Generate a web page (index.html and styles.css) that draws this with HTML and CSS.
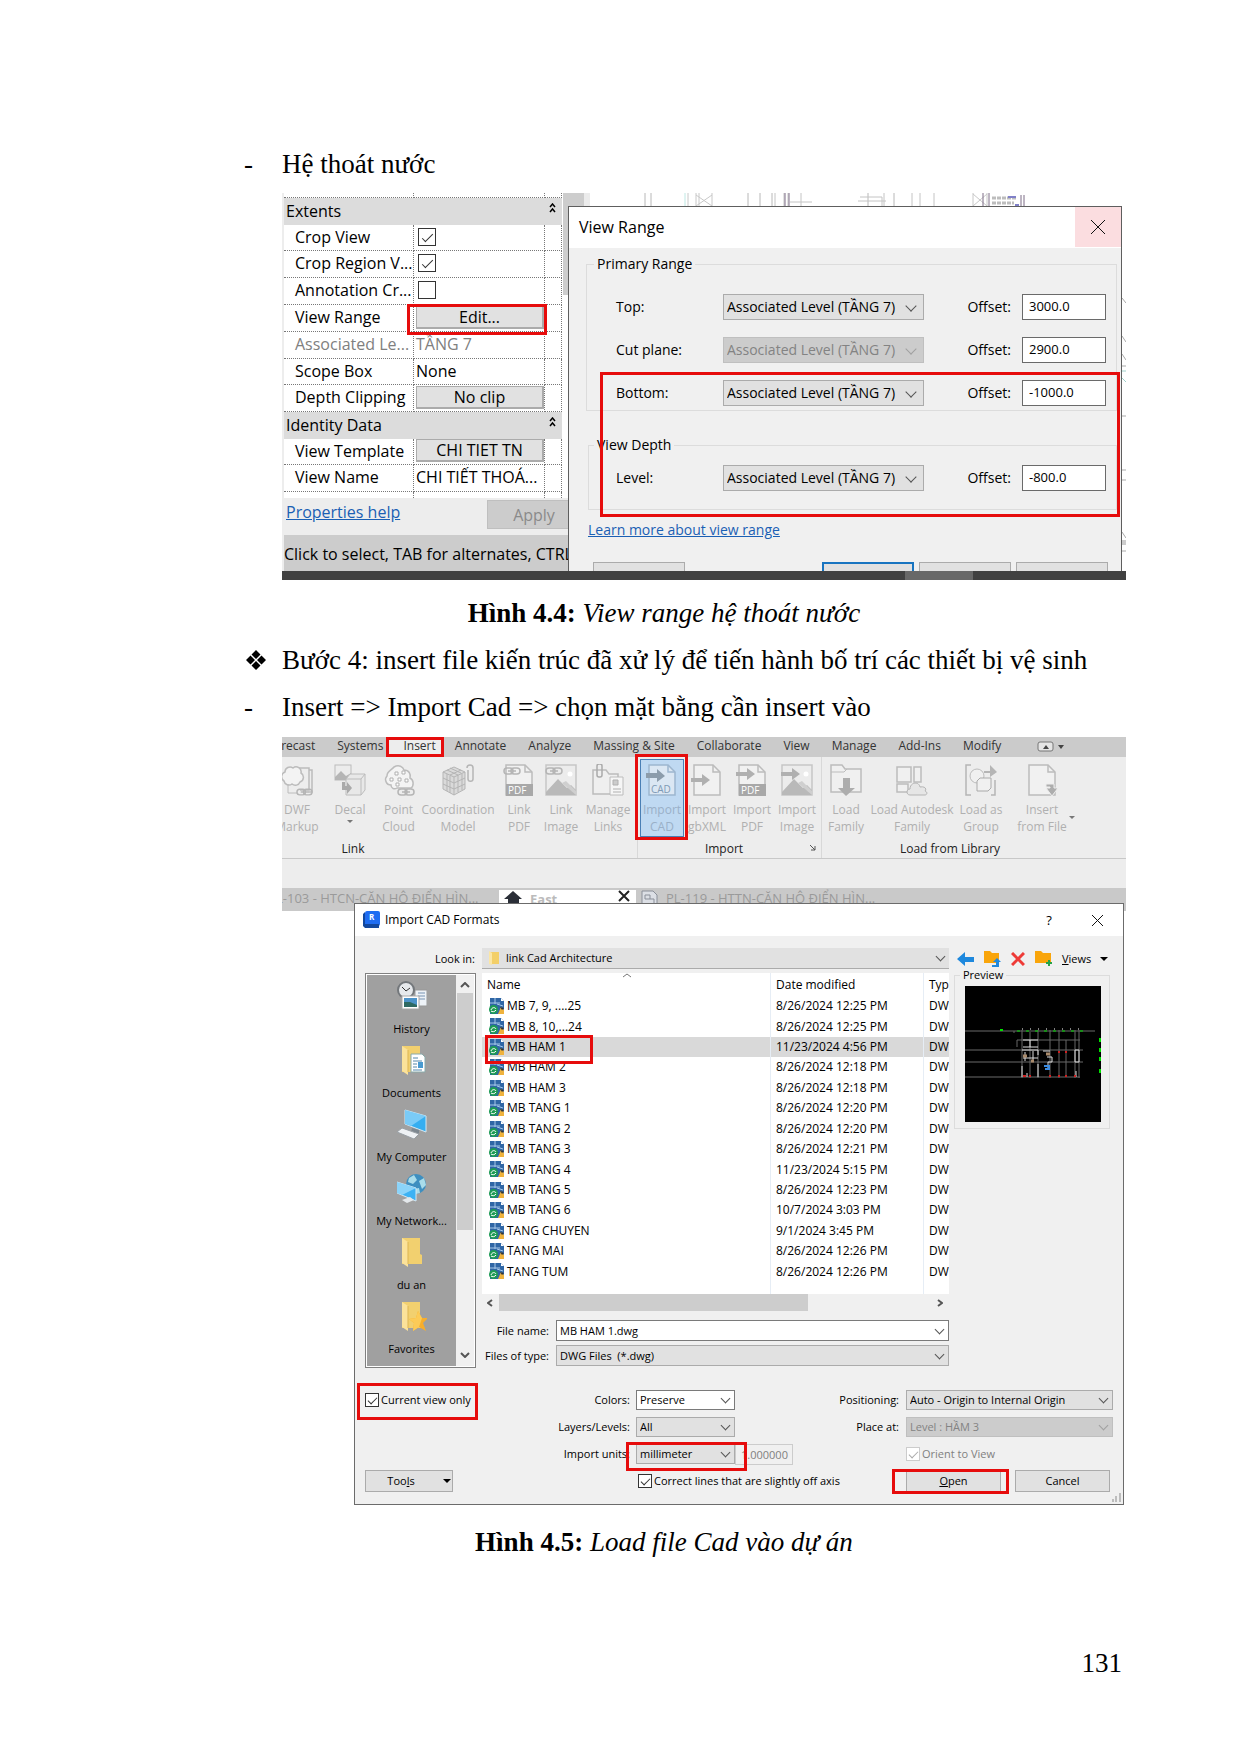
FILE: index.html
```html
<!DOCTYPE html>
<html lang="vi">
<head>
<meta charset="utf-8">
<meta name="viewport" content="width=device-width, initial-scale=1">
<title>Hệ thoát nước</title>
<link rel="stylesheet" href="styles.css">
</head>
<body>
<svg class="defs" aria-hidden="true">
  <symbol id="dwg" viewBox="0 0 16 16">
    <path d="M1 0h11l3 3v13H1z" fill="#2f66a5"/><path d="M12 0l3 3h-3z" fill="#fff"/>
    <path d="M6 0v6M1 5h10M8 6l6 2" stroke="#a9c9ea" fill="none"/>
    <path d="M9 16l3-7 3 3v4z" fill="#efb23c"/><path d="M11 9l2 3 2-2" fill="#333"/>
    <circle cx="4.500" cy="11.500" r="4.500" fill="#1d9a55"/><path d="M2 12c1-3 4-3 5-1M7 12c-1 2-4 2-5 1" stroke="#fff" fill="none"/>
  </symbol>
  <symbol id="folder" viewBox="0 0 30 30">
    <path d="M5 1h18v16l2 1v9H5z" fill="#f2d06f"/><path d="M5 1l6 4v25l-6-4z" fill="#fbe29a"/><path d="M11 5v22" stroke="#dcb553"/>
  </symbol>
  <symbol id="page" viewBox="0 0 32 32">
    <path d="M3 1h19l7 7v23H3z" fill="#f1f1f1" stroke="#bcbcbc" stroke-width="1.500"/><path d="M22 1v7h7" fill="none" stroke="#bcbcbc" stroke-width="1.500"/>
  </symbol>
  <symbol id="arrow" viewBox="0 0 20 12"><path d="M0 4h11V0l8 6-8 6V8H0z" fill="#b0b0b0"/></symbol>
  <symbol id="chain" viewBox="0 0 18 8"><rect x="1" y="1" width="9" height="6" rx="3" fill="none" stroke="#b5b5b5" stroke-width="1.500"/><rect x="8" y="1" width="9" height="6" rx="3" fill="none" stroke="#b5b5b5" stroke-width="1.500"/><path d="M5 4h8" stroke="#b5b5b5" stroke-width="1.500"/></symbol>
  <symbol id="picture" viewBox="0 0 32 32"><rect x="1" y="1" width="30" height="30" fill="#ececec" stroke="#c6c6c6" stroke-width="1.500"/><circle cx="25" cy="10" r="2.500" fill="#fff"/><path d="M1 28l12-13 9 9 4-3 5 5v5H1z" fill="#b9b9b9"/><path d="M17 19l4-2 10 10v4z" fill="#cfcfcf"/></symbol>
</svg>

<main class="sheet">
  <ul class="notes">
    <li class="dash">Hệ thoát nước</li>
  </ul>

  <figure>
    <div class="shot range-shot">
      <div class="range-body">
        <section class="props">
          <div class="props-top">
            <table class="prop-table">
              <colgroup><col class="c-name"><col class="c-value"><col class="c-more"></colgroup>
              <tbody>
                <tr class="sliver-top"><td></td><td></td><td></td></tr>
                <tr class="group"><th colspan="3"><span>Extents<svg width="7" height="10" viewBox="0 0 7 10"><path d="M1 4l2.500-3L6 4M1 9l2.500-3L6 9" fill="none" stroke="#000" stroke-width="1.500"/></svg></span></th></tr>
                <tr class="short"><td><label for="crop">Crop View</label></td><td><input type="checkbox" id="crop" checked></td><td></td></tr>
                <tr><td><label for="region">Crop Region V...</label></td><td><input type="checkbox" id="region" checked></td><td></td></tr>
                <tr><td><label for="annot">Annotation Cr...</label></td><td><input type="checkbox" id="annot"></td><td></td></tr>
                <tr><td>View Range</td><td class="marked"><button type="button">Edit...</button><span class="mark mark-edit"></span></td><td></td></tr>
                <tr class="muted"><td>Associated Le...</td><td>TẦNG 7</td><td></td></tr>
                <tr class="short"><td>Scope Box</td><td>None</td><td></td></tr>
                <tr><td>Depth Clipping</td><td><button type="button">No clip</button></td><td></td></tr>
                <tr class="group"><th colspan="3"><span>Identity Data<svg width="7" height="10" viewBox="0 0 7 10"><path d="M1 4l2.500-3L6 4M1 9l2.500-3L6 9" fill="none" stroke="#000" stroke-width="1.500"/></svg></span></th></tr>
                <tr class="short"><td>View Template</td><td><button type="button">CHI TIET TN</button></td><td></td></tr>
                <tr><td>View Name</td><td>CHI TIẾT THOÁ...</td><td></td></tr>
                <tr class="sliver-bottom"><td></td><td></td><td></td></tr>
              </tbody>
            </table>
            <div class="props-scroll"></div>
          </div>
          <div class="props-help"><a href="#help">Properties help</a><button type="button" disabled>Apply</button></div>
          <div class="status">Click to select, TAB for alternates, CTRL</div>
        </section>

        <div class="canvas">
          <svg class="canvas-top" height="13" width="558" viewBox="0 0 558 13">
            <path d="M0 0h16v13H0z" fill="#cdcdcd"/><path d="M16 0h6v13h-6z" fill="#ebebeb"/>
            <path d="M77 0v13M83 0v13M180 0v13M192 0v13M204 0v13M300 0v13M326 0v13" stroke="#b8b8b8"/>
            <path d="M117 0v13" stroke="#bfe8e4"/><path d="M120 0v13M128 0v13M131 0v13M144 0v13M128 2l16 11M144 2l-16 11M405 1l14 12M419 1l-14 12M405 0v13M419 0v13" stroke="#c8c8c8" fill="none"/>
            <path d="M207 0v13M216 0v13M220 0v13M222 9h22M233 0v13M290 8h28M292 4h22v9M316 0v13M344 0v13M352 0v13M366 0v13" stroke="#c4c4c4" fill="none"/>
            <path d="M217 0v13M221 0v13M415 0v13M421 0v13M453 2v11M456 2v11" stroke="#7d6d86"/>
            <path d="M424 5h24M424 10h22" stroke="#bdbdbd" stroke-width="3" stroke-dasharray="4 1"/><path d="M447 12h4M440 4h8" stroke="#8080c8" stroke-width="2"/>
          </svg>
          <div class="canvas-row">
            <section class="range-dialog">
              <header><h2>View Range</h2><button type="button" aria-label="Close"><svg width="16" height="16" viewBox="0 0 16 16"><path d="M1 1l14 14M15 1L1 15" stroke="#111" fill="none"/></svg></button></header>
              <form class="range-form">
                <fieldset class="primary">
                  <legend>Primary Range</legend>
                  <div class="range-row"><label for="top">Top:</label><span class="pick"><select id="top"><option>Associated Level (TẦNG 7)</option></select></span><label for="top-o">Offset:</label><input type="text" id="top-o" value="3000.0"></div>
                  <div class="range-row"><label for="cut">Cut plane:</label><span class="pick off"><select id="cut" disabled><option>Associated Level (TẦNG 7)</option></select></span><label for="cut-o">Offset:</label><input type="text" id="cut-o" value="2900.0"></div>
                  <div class="range-row"><label for="bottom">Bottom:</label><span class="pick"><select id="bottom"><option>Associated Level (TẦNG 7)</option></select></span><label for="bottom-o">Offset:</label><input type="text" id="bottom-o" value="-1000.0"></div>
                </fieldset>
                <fieldset class="depth">
                  <legend>View Depth</legend>
                  <div class="range-row"><label for="level">Level:</label><span class="pick"><select id="level"><option>Associated Level (TẦNG 7)</option></select></span><label for="level-o">Offset:</label><input type="text" id="level-o" value="-800.0"></div>
                </fieldset>
                <span class="mark mark-range"></span>
              </form>
              <a class="learn" href="#learn">Learn more about view range</a>
              <div class="range-buttons"><button type="button" aria-label="Show"></button><button type="button" class="primary-btn" aria-label="OK"></button><button type="button" aria-label="Apply"></button><button type="button" aria-label="Cancel"></button></div>
            </section>
            <svg width="4" height="365" viewBox="0 0 4 365"><path d="M0 92l4 5M0 130l4 6M0 148l4 6M0 160h4M0 210h4M0 264h4M0 274h4M0 326l4 6M0 345h4" stroke="#a9a9a9" fill="none"/><path d="M0 165h4M0 172l4 4" stroke="#9fd0ca"/><path d="M0 334h4v5H0z" fill="#cdcdcd"/></svg>
          </div>
        </div>
      </div>
      <div class="taskbar"><span></span></div>
    </div>
    <figcaption><b>Hình 4.4:</b> <i>View range hệ thoát nước</i></figcaption>
  </figure>

  <ul class="notes">
    <li class="diamond"><svg width="20" height="20" viewBox="0 0 20 20"><path d="M10 0l4.500 4.500L10 9 5.500 4.500zM10 11l4.500 4.500L10 20l-4.500-4.500zM4.500 5.500L9 10l-4.500 4.500L0 10zM15.500 5.500L20 10l-4.500 4.500L11 10z"/></svg>Bước 4: insert file kiến trúc đã xử lý để tiến hành bố trí các thiết bị vệ sinh</li>
    <li class="dash">Insert =&gt; Import Cad =&gt; chọn mặt bằng cần insert vào</li>
  </ul>

  <figure>
    <div class="shot cad-shot">
      <nav class="ribbon-tabs">
        <a class="cut" href="#precast">Precast</a><a href="#systems">Systems</a><a class="current" href="#insert">Insert</a><a href="#annotate">Annotate</a><a href="#analyze">Analyze</a><a href="#massing">Massing &amp; Site</a><a href="#collaborate">Collaborate</a><a href="#view">View</a><a href="#manage">Manage</a><a href="#addins">Add-Ins</a><a href="#modify">Modify</a>
        <svg class="tab-more" width="28" height="12" viewBox="0 0 28 12"><rect x="1" y="1" width="15" height="9" rx="2" fill="#e4e4e4" stroke="#777"/><path d="M6 8l3-4 3 4zM21 4h6l-3 4z" fill="#444"/></svg>
      </nav>

      <div class="ribbon">
        <section class="panel panel-link">
          <div class="tools">
            <button type="button" class="w-dwf"><svg viewBox="0 0 32 32"><path d="M12 4h16v22h-9M28 6h3v22h-4" fill="none" stroke="#bcbcbc" stroke-width="1.500"/><path d="M4 8a5 5 0 0 1 8-4 5 5 0 0 1 8 5 5 5 0 0 1-1 9 5 5 0 0 1-8 2 5 5 0 0 1-8-3 5 5 0 0 1 1-9z" fill="#f3f3f3" stroke="#bcbcbc" stroke-width="1.500"/><path d="M7 20v9h9" fill="none" stroke="#bcbcbc"/><use href="#chain" x="15" y="24" width="17" height="8"/></svg>DWF<br>Markup</button>
            <button type="button" class="w-decal"><svg viewBox="0 0 32 32"><rect x="1" y="1" width="16" height="15" fill="#ececec" stroke="#bcbcbc"/><path d="M1 13l6-6 5 5 5-3v7H1z" fill="#b5b5b5"/><path d="M12 15l4-5h15v16l-4 5H12z" fill="#e8e8e8" stroke="#bcbcbc"/><path d="M12 15h15v16M27 15l4-5" fill="none" stroke="#bcbcbc"/><path d="M8 18v8h5v4l5-6-5-6v4h-2v-4z" fill="#aaa"/></svg>Decal<br>&nbsp;<i class="caret under"></i></button>
            <button type="button" class="w-point"><svg viewBox="0 0 32 32"><path d="M4 12c0-5 5-6 7-9 5-3 9 0 10 3 5 0 7 4 6 8 4 2 4 8 1 10H14c-3 2-6 0-6-3-5 0-7-6-4-9z" fill="#f4f4f4" stroke="#bcbcbc" stroke-width="1.500"/><path d="M12 8h3v3h-3zM19 7h3v3h-3zM7 14h3v3H7zM15 14h3v3h-3zM22 15h3v3h-3zM13 19h3v3h-3z" fill="#fff" stroke="#b0b0b0"/><use href="#chain" x="14" y="24" width="18" height="8"/></svg>Point<br>Cloud</button>
            <button type="button" class="w-coord"><svg viewBox="0 0 32 32"><path d="M1 8l11-5 11 5v17l-11 6-11-6z" fill="#dadada" stroke="#b5b5b5"/><path d="M1 8l11 5 11-5M12 13v18M5 10v17M8 12v17M16 11v17M20 10v16M1 14l11 5 11-5M1 20l11 5 11-5M5 6l11 5M8 4l11 5M19 6L8 11" fill="none" stroke="#b5b5b5"/><path d="M26 6v9c0 3 5 3 5 0V4c0-4-6-4-6 0" fill="none" stroke="#b5b5b5" stroke-width="1.500"/></svg>Coordination<br>Model</button>
            <button type="button" class="w-lpdf"><svg viewBox="0 0 32 32"><use href="#page" width="32" height="32"/><path d="M3 20h27v12H3z" fill="#a8a8a8"/><text x="5" y="30" class="glyph">PDF</text><use href="#chain" x="0" y="3" width="18" height="8"/></svg>Link<br>PDF</button>
            <button type="button" class="w-limg"><svg viewBox="0 0 32 32"><use href="#picture" width="32" height="32"/><use href="#chain" x="0" y="3" width="18" height="8"/></svg>Link<br>Image</button>
            <button type="button" class="w-manage"><svg viewBox="0 0 32 32"><path d="M1 6h13l3 4h9v20H1z" fill="#efefef" stroke="#bcbcbc" stroke-width="1.500"/><rect x="5" y="0" width="5" height="13" rx="2" fill="none" stroke="#aaa" stroke-width="1.500"/><path d="M18 13h13v18H18z" fill="#f6f6f6" stroke="#bcbcbc"/><path d="M21 16h5v5h-5zM21 25h8M21 28h8" stroke="#b0b0b0" fill="#ccc"/></svg>Manage<br>Links</button>
          </div>
          <h3>Link</h3>
        </section>
        <section class="panel panel-import">
          <div class="tools">
            <button type="button" class="w-imp hot"><svg viewBox="0 0 32 32"><path d="M3 1h19l7 7v23H3z" fill="#dbe7f3" stroke="#9db6cf" stroke-width="1.500"/><path d="M22 1v7h7" fill="none" stroke="#9db6cf" stroke-width="1.500"/><path d="M0 9h11V5l8 7-8 6v-4H0z" fill="#8c9cab"/><text x="5" y="29" class="glyph blue">CAD</text></svg>Import<br>CAD<span class="mark mark-cad"></span></button>
            <button type="button" class="w-imp"><svg viewBox="0 0 32 32"><use href="#page" width="32" height="32"/><use href="#arrow" x="0" y="10" width="20" height="12"/></svg>Import<br>gbXML</button>
            <button type="button" class="w-imp"><svg viewBox="0 0 32 32"><use href="#page" width="32" height="32"/><path d="M3 20h27v12H3z" fill="#a8a8a8"/><text x="5" y="30" class="glyph">PDF</text><use href="#arrow" x="0" y="4" width="20" height="12"/></svg>Import<br>PDF</button>
            <button type="button" class="w-imp"><svg viewBox="0 0 32 32"><use href="#picture" width="32" height="32"/><use href="#arrow" x="0" y="4" width="20" height="12"/></svg>Import<br>Image</button>
          </div>
          <h3>Import<svg width="6" height="6" viewBox="0 0 6 6"><path d="M0 0l5 5M5 1v4H1" stroke="#555" fill="none"/></svg></h3>
        </section>
        <section class="panel panel-library">
          <div class="tools">
            <button type="button" class="w-fam"><svg viewBox="0 0 32 32"><path d="M1 28V1h11l3 4h16v23z" fill="#f0f0f0" stroke="#bcbcbc" stroke-width="1.500"/><path d="M1 8h13l3-3" stroke="#bcbcbc" fill="none"/><path d="M13 14h7v10h5l-9 8-8-8h5z" fill="#adadad"/></svg>Load<br>Family</button>
            <button type="button" class="w-auto"><svg viewBox="0 0 32 32"><path d="M1 3h14v15H1zM18 3h7v15h-7zM1 20h11v8H1z" fill="#f0f0f0" stroke="#bcbcbc" stroke-width="1.500"/><path d="M14 31c-4 0-4-6 0-6 0-7 9-8 10-2 5-1 7 2 5 4 3 1 2 4 0 4z" fill="#e6e6e6" stroke="#b5b5b5"/></svg>Load Autodesk<br>Family</button>
            <button type="button" class="w-group"><svg viewBox="0 0 32 32"><path d="M6 1H1v30h5M26 31h4V16" fill="none" stroke="#b5b5b5" stroke-width="1.500"/><circle cx="12" cy="12" r="7" fill="#f0f0f0" stroke="#bcbcbc"/><path d="M12 17l3-3h11v10l-3 3H12z" fill="#f0f0f0" stroke="#aaa"/><path d="M19 7h6V1l7 7-7 5v-4h-6z" fill="#b5b5b5"/></svg>Load as<br>Group</button>
            <button type="button" class="w-file"><svg viewBox="0 0 32 32"><use href="#page" width="32" height="32"/><path d="M20 20h8v4h4l-6 8-6-8h4v-1h-4z" fill="#adadad" stroke="#ededed"/></svg>Insert<br>from File<i class="caret side"></i></button>
          </div>
          <h3>Load from Library</h3>
        </section>
      </div>

      <div class="option-bar"></div>

      <div class="view-tabs">
        <span class="view-tab first">L-103 - HTCN-CĂN HỘ ĐIỂN HÌN...</span>
        <span class="view-tab active"><svg width="18" height="16" viewBox="0 0 18 16"><path d="M9 1l9 8h-3v7H4V9H0z" fill="#2b2f38"/></svg><b>East</b><svg class="end" width="12" height="12" viewBox="0 0 12 12"><path d="M1 1l10 10M11 1L1 11" stroke="#222" stroke-width="2"/></svg></span>
        <span class="view-tab"><svg width="17" height="16" viewBox="0 0 17 16"><path d="M1 1h11l4 4v11H1z" fill="#dcdfe5" stroke="#8a8f99"/><path d="M4 5h5v4H4zM9 9h4v5" fill="none" stroke="#8a8f99"/></svg>PL-119 - HTTN-CĂN HỘ ĐIỂN HÌN...</span>
      </div>

      <section class="cad-dialog">
        <header>
          <svg width="17" height="18" viewBox="0 0 17 18"><rect x="2" y="0" width="15" height="15" rx="2" fill="#1f6df2"/><path d="M0 3l2-2v12h14v4H2l-2-2z" fill="#12489f"/><text x="6" y="9" class="r">R</text></svg>
          <h2>Import CAD Formats</h2>
          <button type="button" class="help" aria-label="Help">?</button>
          <button type="button" class="close" aria-label="Close"><svg width="11" height="11" viewBox="0 0 11 11"><path d="M0 0l11 11M11 0L0 11" stroke="#111"/></svg></button>
        </header>
        <form class="cad-form">
          <div class="look">
            <label for="look">Look in:</label>
            <span class="pick look-pick"><svg width="10" height="14" viewBox="0 0 10 14"><path d="M0 1h10v12H0z" fill="#f3cf68"/><path d="M0 0l3 2v12l-3-1z" fill="#fbe6a6"/></svg><select id="look"><option>link Cad Architecture</option></select></span>
            <div class="look-tools">
              <button type="button" aria-label="Back"><svg width="17" height="14" viewBox="0 0 17 14"><path d="M0 7l8-7v5h9v5H8v4z" fill="#1e88dd"/></svg></button>
              <button type="button" aria-label="Up"><svg width="17" height="17" viewBox="0 0 17 17"><path d="M0 1h6l2 2h7v10H0z" fill="#f9a50b"/><path d="M8 15h4V12H9l4-4 4 4h-2v5H8z" fill="#1e88dd"/></svg></button>
              <button type="button" aria-label="Delete"><svg width="14" height="14" viewBox="0 0 14 14"><path d="M1 1l12 12M13 1L1 13" stroke="#ee3b37" stroke-width="3"/></svg></button>
              <button type="button" aria-label="New folder"><svg width="17" height="17" viewBox="0 0 17 17"><path d="M0 1h6l2 2h8v10H0z" fill="#f9a50b"/><path d="M14 10v6M11 13h6" stroke="#25a347" stroke-width="2"/></svg></button>
              <button type="button" class="views"><span><u>V</u>iews</span><i class="caret"></i></button>
            </div>
          </div>

          <div class="browse">
            <div class="places">
              <ul>
                <li><svg viewBox="0 0 30 30"><path d="M18 9h12v16H18z" fill="#eef3f8" stroke="#999"/><path d="M21 12h7M21 15h7M21 18h7" stroke="#7793b3"/><circle cx="9" cy="9" r="8" fill="#e6e9ec" stroke="#73777b" stroke-width="2"/><path d="M5 6l4 4 4-3" stroke="#333" fill="none"/><path d="M5 15h17v13H5z" fill="#fff" stroke="#aaa"/><path d="M7 17h13v9H7z" fill="#4c93c9"/><path d="M7 21h6l7 3v2H7z" fill="#2f6a63"/></svg>History</li>
                <li><svg viewBox="0 0 30 30"><use href="#folder" width="30" height="30"/><path d="M14 9h11l3 3v15H14z" fill="#fff" stroke="#8aa"/><path d="M16 13h5M16 16h9M16 19h4M16 22h4M16 25h9" stroke="#58a"/><path d="M21 17h5v6h-5z" fill="#489ad0"/></svg>Documents</li>
                <li><svg viewBox="0 0 30 30"><path d="M8 1l21 6v16L8 15z" fill="#35aef0" stroke="#d5e8f3"/><path d="M8 1l21 6L14 17l-6-2z" fill="#7acbf7"/><path d="M15 19l7 2v4l-8-2z" fill="#7d8790"/><path d="M0 23l5-4 17 6-5 5z" fill="#eef1f4" stroke="#9aa0a6"/></svg>My Computer</li>
                <li><svg viewBox="0 0 30 30"><circle cx="19" cy="11" r="10" fill="#3e8fc0"/><path d="M12 5l5-3 3 5-4 4-5-2zM22 8l5-3 2 7-4 4zM17 16l5-1 1 5-4 1z" fill="#a9dcea"/><path d="M0 9l19 6v13L0 20z" fill="#3cb2f4" stroke="#d5e8f3"/><path d="M0 9l19 6L5 22l-5-2z" fill="#8bd4fa"/><path d="M5 27l8-3 4 3-7 3z" fill="#e4e8eb"/></svg>My Network...</li>
                <li><svg viewBox="0 0 30 30"><use href="#folder" width="30" height="30"/></svg>du an</li>
                <li><svg viewBox="0 0 30 30"><use href="#folder" width="30" height="30"/><path d="M21 10l4 7 6 0-5 5 3 8-7-4-6 4 1-8-5-4 7-1z" fill="#f8ae2b"/><path d="M21 10l4 7-3 9-6 4 1-8-5-4 7-1z" fill="#fccb57"/></svg>Favorites</li>
              </ul>
              <div class="vscroll"><svg width="10" height="6" viewBox="0 0 10 6"><path d="M1 5l4-4 4 4" fill="none" stroke="#555" stroke-width="2"/></svg><span></span><svg width="10" height="6" viewBox="0 0 10 6"><path d="M1 1l4 4 4-4" fill="none" stroke="#555" stroke-width="2"/></svg></div>
            </div>

            <div class="files">
              <div class="file-pane">
                <table class="file-table">
                  <colgroup><col><col class="c-date"><col class="c-type"></colgroup>
                  <thead><tr><th>Name<svg width="8" height="5" viewBox="0 0 8 5"><path d="M0 4l4-3 4 3" fill="none" stroke="#777"/></svg></th><th>Date modified</th><th>Typ</th></tr></thead>
                  <tbody>
                    <tr><td><svg><use href="#dwg"/></svg>MB 7, 9, ....25</td><td>8/26/2024 12:25 PM</td><td>DW</td></tr>
                    <tr><td><svg><use href="#dwg"/></svg>MB 8, 10,...24</td><td>8/26/2024 12:25 PM</td><td>DW</td></tr>
                    <tr class="selected"><td><svg><use href="#dwg"/></svg>MB HAM 1<span class="mark mark-file"></span></td><td>11/23/2024 4:56 PM</td><td>DW</td></tr>
                    <tr><td><svg><use href="#dwg"/></svg>MB HAM 2</td><td>8/26/2024 12:18 PM</td><td>DW</td></tr>
                    <tr><td><svg><use href="#dwg"/></svg>MB HAM 3</td><td>8/26/2024 12:18 PM</td><td>DW</td></tr>
                    <tr><td><svg><use href="#dwg"/></svg>MB TANG 1</td><td>8/26/2024 12:20 PM</td><td>DW</td></tr>
                    <tr><td><svg><use href="#dwg"/></svg>MB TANG 2</td><td>8/26/2024 12:20 PM</td><td>DW</td></tr>
                    <tr><td><svg><use href="#dwg"/></svg>MB TANG 3</td><td>8/26/2024 12:21 PM</td><td>DW</td></tr>
                    <tr><td><svg><use href="#dwg"/></svg>MB TANG 4</td><td>11/23/2024 5:15 PM</td><td>DW</td></tr>
                    <tr><td><svg><use href="#dwg"/></svg>MB TANG 5</td><td>8/26/2024 12:23 PM</td><td>DW</td></tr>
                    <tr><td><svg><use href="#dwg"/></svg>MB TANG 6</td><td>10/7/2024 3:03 PM</td><td>DW</td></tr>
                    <tr><td><svg><use href="#dwg"/></svg>TANG CHUYEN</td><td>9/1/2024 3:45 PM</td><td>DW</td></tr>
                    <tr><td><svg><use href="#dwg"/></svg>TANG MAI</td><td>8/26/2024 12:26 PM</td><td>DW</td></tr>
                    <tr><td><svg><use href="#dwg"/></svg>TANG TUM</td><td>8/26/2024 12:26 PM</td><td>DW</td></tr>
                    <tr class="rest"><td></td><td></td><td></td></tr>
                  </tbody>
                </table>
              </div>
              <div class="hscroll"><svg width="6" height="8" viewBox="0 0 6 8"><path d="M5 1L1 4l4 3" fill="none" stroke="#555" stroke-width="2"/></svg><span></span><svg width="6" height="8" viewBox="0 0 6 8"><path d="M1 1l4 3-4 3" fill="none" stroke="#555" stroke-width="2"/></svg></div>
              <div class="file-fields">
                <label for="fname">File name:</label><span class="pick white"><input type="text" id="fname" value="MB HAM 1.dwg"></span>
                <label for="ftype">Files of type:</label><span class="pick"><select id="ftype"><option>DWG Files&nbsp; (*.dwg)</option></select></span>
              </div>
            </div>

            <fieldset class="preview">
              <legend>Preview</legend>
              <svg viewBox="0 0 136 136">
                <path d="M0 0h136v136H0z"/>
                <path d="M0 45h130M0 64h118M0 76h118M0 91h115" stroke="#6b6b6b" stroke-width="1"/>
                <path d="M57 44v48M65 46v46M73 44v48M85 44v48M94 44v48M101 54v37M110 44v48M114 44v48M52 54h63M52 54v7M49 45v2" stroke="#666" fill="none"/>
                <path d="M58 54h15M58 61h15M65 54v7M57 64h16v5M58 72h15M60 66v9M68 65v11M73 78v13M57 80v11M62 87v4M110 64h4v12h-4zM111 85v6M78 65h7M82 71h5v5h-4v8" stroke="#ddd" fill="none"/>
                <path d="M52 45h72" stroke="#00e000" stroke-dasharray="3 6"/><path d="M35 44h3M135 53h1v2h-1zM135 63h1v2h-1zM135 84h1v2h-1zM135 72h1v2h-1z" stroke="#00e000" stroke-width="2"/>
                <path d="M57 43h58" stroke="#fff" stroke-dasharray="1 7"/>
                <path d="M79 80h5v3h-4" stroke="#3b8be0" stroke-width="2" fill="none"/><path d="M58 70h4M66 75h3M81 68h4" stroke="#a98a6b" stroke-width="3"/>
                <path d="M94 65v2M101 65v2M58 90h3M65 89v2M85 89v2M94 89v2M101 89v2M110 89v2" stroke="#d02020" stroke-width="2"/>
              </svg>
            </fieldset>
          </div>

          <div class="options">
            <label class="tick a1 current-view"><input type="checkbox" checked>Current view only<span class="mark mark-view"></span></label>
            <label class="b1" for="colors">Colors:</label><span class="pick white c1"><select id="colors"><option>Preserve</option></select></span>
            <label class="d1" for="pos">Positioning:</label><span class="pick e1"><select id="pos"><option>Auto - Origin to Internal Origin</option></select></span>
            <label class="b2" for="layers">Layers/Levels:</label><span class="pick c2"><select id="layers"><option>All</option></select></span>
            <label class="d2" for="place">Place at:</label><span class="pick off e2"><select id="place" disabled><option>Level : HẦM 3</option></select></span>
            <label class="b3" for="units">Import units:</label>
            <span class="units c3"><span class="pick"><select id="units"><option>millimeter</option></select></span><input type="text" value="1.000000" disabled aria-label="Scale"><span class="mark mark-units"></span></span>
            <label class="tick e3 dim"><input type="checkbox" checked disabled>Orient to View</label>
            <button type="button" class="btn tools-btn a4"><span>Too<u>l</u>s</span><i class="caret"></i></button>
            <label class="tick c4"><input type="checkbox" checked>Correct lines that are slightly off axis</label>
            <div class="actions e4"><button type="button" class="btn"><span><u>O</u>pen</span><span class="mark mark-open"></span></button><button type="button" class="btn">Cancel</button></div>
          </div>
        </form>
        <svg class="grip" width="9" height="9" viewBox="0 0 9 9"><path d="M0 6h2v3H0zM3 3h2v6H3zM7 0h2v9H7z" fill="#bdbdbd"/></svg>
      </section>
    </div>
    <figcaption><b>Hình 4.5:</b> <i>Load file Cad vào dự án</i></figcaption>
  </figure>

  <footer>131</footer>
</main>
</body>
</html>
```

FILE: styles.css
```css
* { box-sizing: border-box; }
body { margin: 0; background: #fff; color: #000; }
.defs { position: absolute; width: 0; height: 0; }
button, input, select { font: inherit; color: inherit; margin: 0; border-radius: 0; }
button { padding: 0; border: 0; background: none; }
svg { display: block; flex: none; }
h2, h3 { margin: 0; font-weight: 400; }
ul { list-style: none; margin: 0; padding: 0; }
fieldset { margin: 0; padding: 0; min-width: 0; border: 1px solid #dcdcdc; }
i.caret { display: block; width: 0; height: 0; border: 4px solid transparent; border-top-color: currentColor; border-bottom: 0; }

/* document page */
.sheet { padding: 141px 114px 66px 202px; font: 27px/47px "Liberation Serif", "Times New Roman", serif; }
.notes li { position: relative; padding-left: 80px; white-space: nowrap; }
.notes .dash::before { content: "-"; position: absolute; left: 42px; }
.notes .diamond svg { position: absolute; left: 44px; top: 13px; }
figure { margin: 5px 0 0; }
.shot { margin-left: 80px; overflow: hidden; font-family: "Open Sans", "Segoe UI", sans-serif; }
figcaption { margin-top: 10px; text-align: center; }
footer { margin-top: 74px; padding-right: 4px; text-align: right; }

/* red highlight frames */
.mark { position: absolute; border: 3px solid #e60c0c; pointer-events: none; z-index: 2; }

/* shared drop-down */
.pick { position: relative; display: flex; align-items: center; border: 1px solid #ababab; background: #e1e1e1; min-width: 0; }
.pick::after { content: ""; position: absolute; right: 5px; top: 50%; width: 6px; height: 6px; margin-top: -5px; border: solid #555; border-width: 0 1px 1px 0; transform: rotate(45deg); pointer-events: none; }
.pick select, .pick input { appearance: none; flex: 1; min-width: 0; height: 100%; border: 0; padding: 0 0 0 3px; background: none; outline: 0; opacity: 1; }
.pick.white { background: #fff; border-color: #7a7a7a; }
.pick.off { background: #cccccc; border-color: #bfbfbf; color: #838383; }
.pick.off::after { border-color: #a0a0a0; }
input[type="checkbox"] { appearance: none; position: relative; flex: none; width: 14px; height: 14px; border: 1px solid #333; background: #fff; }
input[type="checkbox"]:checked::after { content: ""; position: absolute; left: 4px; top: 1px; width: 4px; height: 8px; border: solid #333; border-width: 0 1px 1px 0; transform: rotate(45deg); }

/* properties palette */
.range-body { display: flex; }
.props { flex: 0 0 286px; overflow: hidden; border-left: 2px solid #ededed; font-size: 16px; line-height: 22px; white-space: nowrap; }
.props-top { display: flex; }
.props-scroll { flex: 1; height: 102px; margin-left: 1px; background: #cdcdcd; }
.prop-table { width: 278px; table-layout: fixed; border-collapse: separate; border-spacing: 0; }
.c-name { width: 130px; }
.c-value { width: 131px; }
.c-more { width: 17px; }
.prop-table tr { height: 27px; }
.prop-table tr.short { height: 26px; }
.prop-table tr.sliver-top { height: 5px; }
.prop-table tr.sliver-bottom { height: 6px; }
.prop-table td { padding: 0 0 2px 2px; border: dotted #777; border-width: 0 1px 1px 0; }
.prop-table td:first-child { padding-left: 11px; }
.prop-table .sliver-top td, .prop-table .sliver-bottom td { padding: 0; }
.prop-table .sliver-bottom td { border-bottom: 0; }
.prop-table th { padding: 0 6px 2px 2px; background: #dcdcdc; font-weight: 400; text-align: left; }
.prop-table th span { display: flex; justify-content: space-between; }
.prop-table th svg { margin-top: 3px; }
.prop-table input { display: block; width: 18px; height: 18px; margin-left: 2px; }
.prop-table input:checked::after { left: 6px; top: 2px; height: 10px; }
.prop-table button { display: block; width: 100%; height: 23px; border: 1px solid #ababab; border-width: 1px 2px 2px 1px; background: #e1e1e1; line-height: 20px; }
.prop-table .marked { position: relative; }
.mark-edit { left: -7px; right: -3px; top: -1px; bottom: -4px; }
.prop-table .muted { color: #808080; }
.props-help { display: flex; justify-content: space-between; height: 37px; padding: 2px 0 0 2px; background: #ededed; }
.props-help a, .learn { color: #1a5fb4; text-decoration: underline; }
.props-help a { line-height: 24px; }
.props-help button { width: 81px; height: 29px; padding-left: 12px; border: 1px solid #bfbfbf; border-right: 0; background: #cccccc; color: #8a8a8a; }
.status { height: 36px; background: #cccccc; line-height: 38px; }
.taskbar { height: 9px; padding-left: 623px; background: #414141; }
.taskbar span { display: block; width: 68px; height: 9px; background: #686868; }

/* view range dialog */
.canvas { flex: 1; min-width: 0; overflow: hidden; }
.canvas-row { display: flex; }
.range-dialog { flex: 1; height: 365px; overflow: hidden; border: 1px solid #5e5e5e; border-bottom: 0; background: #f0f0f0; font-size: 14px; line-height: 18px; }
.range-dialog header { display: flex; justify-content: space-between; background: #fff; height: 41px; padding-left: 10px; }
.range-dialog h2 { font-size: 16px; line-height: 40px; }
.range-dialog header button { display: grid; place-items: center; width: 46px; height: 40px; background: #fbdde0; }
.range-form { position: relative; padding: 7px 4px 0 17px; }
.range-form legend { margin-left: -22px; padding: 0 3px; line-height: 18px; }
.primary { height: 156px; padding: 21px 10px 0 29px; }
.depth { height: 74px; margin: 25px 0 0 2px; padding: 11px 10px 0 27px; }
.range-row { display: grid; grid-template-columns: 107px 201px 1fr 84px; align-items: center; height: 26px; margin-bottom: 17px; }
.range-row label:nth-of-type(2) { justify-self: end; margin-right: 11px; }
.range-row .pick, .range-row > input { height: 26px; }
.range-row .pick::after { right: 8px; width: 7px; height: 7px; }
.range-row > input { width: 84px; padding: 0 0 2px 6px; border: 1px solid #6a6a6a; background: #fff; font-size: 13px; }
.mark-range { left: 31px; right: 1px; top: 124px; height: 145px; }
.learn { display: block; margin: 11px 0 0 19px; }
.range-buttons { display: flex; gap: 5px; margin-top: 23px; padding: 0 13px 0 24px; }
.range-buttons button { width: 92px; height: 22px; border: 1px solid #ababab; background: #e1e1e1; }
.range-buttons .primary-btn { margin-left: auto; border: 2px solid #1874c0; }

/* ribbon */
.cad-shot { font-size: 12px; line-height: 17px; color: #222; white-space: nowrap; }
.notes + figure .cad-shot { margin-top: 6px; }
.ribbon-tabs { display: flex; gap: 22px; height: 20px; background: #cbcbcb; color: #333; line-height: 18px; }
.ribbon-tabs a { color: inherit; text-decoration: none; }
.ribbon-tabs .cut { margin-left: -8px; }
.ribbon-tabs .current { background: #ededed; outline: 3px solid #e60c0c; outline-offset: -3px; margin: 0 -11px 0 -19px; padding: 0 8px 0 17px; }
.tab-more { margin: 4px 0 0 14px; }
.ribbon { display: flex; height: 102px; border-bottom: 1px solid #c8c8c8; background: #ededed; }
.panel { display: flex; flex-direction: column; justify-content: space-between; flex: none; padding: 2px 0 1px; }
.panel-link { width: 355px; }
.panel-import { width: 185px; border: solid #d8d8d8; border-width: 0 1px; }
.panel-library { flex: 1; }
.panel h3 { position: relative; font-size: 12px; line-height: 16px; text-align: center; }
.panel-link h3 { padding-right: 213px; }
.panel-import h3 { padding-right: 11px; }
.panel-import h3 svg { position: absolute; right: 5px; top: 4px; }
.panel-library h3 { padding-right: 48px; }
.tools { display: flex; }
.tools button { position: relative; flex: none; color: #b0b0b0; height: 78px; }
.tools button > svg { width: 32px; height: 32px; margin: 2px auto 5px; }
.tools .caret { position: absolute; color: #777; border-width: 3px; border-bottom-width: 0; }
.tools .under { left: 23px; bottom: 14px; }
.tools .side { right: 1px; bottom: 18px; }
.panel-link .tools { margin-left: -12px; }
.w-dwf { width: 54px; }
.w-decal { width: 52px; }
.w-point { width: 45px; }
.w-coord { width: 74px; }
.w-lpdf { width: 48px; }
.w-limg { width: 36px; }
.w-manage { width: 58px; }
.panel-import .tools { gap: 1px; padding-left: 2px; }
.w-imp { width: 44px; }
.w-fam { width: 48px; }
.w-auto { width: 84px; }
.w-group { width: 54px; }
.w-file { width: 68px; }
.tools .hot { background: #bfd9f2; outline: 1px solid #4a7fb5; outline-offset: -1px; color: #9ab0c8; }
.mark-cad { left: -5px; right: -4px; top: -5px; bottom: -3px; }
.glyph { font: 10px "Open Sans", sans-serif; fill: #fff; }
.glyph.blue { fill: #7f9ab5; }
.option-bar { height: 29px; background: #ededed; }
.view-tabs { display: flex; height: 23px; background: #c9c9c9; color: #9a9a9a; font-size: 13px; line-height: 21px; }
.view-tab { display: flex; gap: 8px; padding: 0 0 0 5px; }
.view-tab svg { margin-top: 2px; }
.view-tab.first { width: 217px; padding: 0; margin-left: -6px; overflow: hidden; }
.view-tab.active { width: 137px; margin: 2px 0 0 6px; padding: 0 6px 0 5px; background: #fff; color: #bbb; line-height: 18px; }
.view-tab.active svg { margin-top: 0; }
.view-tab .end { margin: 3px 0 0 auto; }

/* import dialog */
.cad-dialog { position: relative; margin: -8px 2px 4px 72px; height: 602px; border: 1px solid #6b6b6b; background: #f0f0f0; color: #000; font-size: 11px; line-height: 16px; }
.cad-dialog header { display: flex; align-items: center; height: 32px; padding-left: 8px; background: #fff; }
.cad-dialog h2 { flex: 1; margin-left: 5px; font-size: 12px; }
.r { font: bold 8px "Open Sans", sans-serif; fill: #fff; }
.help { width: 20px; margin-right: 33px; font-size: 13px; }
.close { margin-right: 20px; }
.cad-form { padding: 12px 10px 0; }
.look { display: flex; align-items: center; height: 21px; }
.look > label { width: 117px; padding-right: 7px; text-align: right; }
.look-pick { flex: 1; height: 21px; padding-left: 7px; border-width: 0 0 1px; }
.look-pick select { padding-left: 7px; }
.look-tools { display: flex; align-items: center; gap: 10px; width: 164px; padding-left: 8px; }
.views { display: flex; align-items: center; gap: 9px; }
.browse { display: flex; margin-top: 4px; }
.places { display: flex; width: 111px; height: 395px; border: 1px solid #808080; outline: 1px solid #fff; outline-offset: -2px; padding: 1px; background: #f0f0f0; }
.places ul { flex: 1; padding-top: 6px; background: #a0a0a0; text-align: center; }
.places li { height: 64px; }
.places li svg { width: 30px; height: 30px; margin: 0 auto 10px; }
.vscroll { display: flex; flex-direction: column; align-items: center; width: 18px; padding-top: 7px; }
.vscroll span { width: 16px; height: 237px; margin: 5px 0 auto; background: #cdcdcd; }
.vscroll svg:last-child { margin-bottom: 8px; }
.files { flex: 1; min-width: 0; margin-left: 6px; }
.file-pane { height: 321px; background: #fff; overflow: hidden; font-size: 12px; }
.file-table { width: 100%; height: 321px; table-layout: fixed; border-collapse: separate; border-spacing: 0; }
.c-date { width: 153px; }
.c-type { width: 26px; }
.file-table th, .file-table td { padding: 0 0 0 5px; border-left: 1px solid #e6edf5; font-weight: 400; text-align: left; line-height: 16px; }
.file-table th:first-child, .file-table td:first-child { border-left: 0; }
.file-table thead { height: 23px; }
.file-table th:first-child { position: relative; }
.file-table th svg { position: absolute; left: 141px; top: 0; }
.file-table td:first-child { position: relative; padding-left: 25px; }
.file-table td svg { position: absolute; left: 7px; top: 2px; width: 16px; height: 16px; }
.file-table .rest td { height: 12px; }
.selected { background: #d9d9d9; }
.mark-file { left: 3px; top: -2px; width: 108px; height: 29px; }
.hscroll { display: flex; align-items: center; height: 17px; padding: 0 6px 0 5px; }
.hscroll span { width: 309px; height: 17px; margin: 0 auto 0 6px; background: #cdcdcd; }
.file-fields { display: grid; grid-template-columns: 67px 1fr; column-gap: 7px; row-gap: 4px; margin-top: 9px; }
.file-fields label { text-align: right; line-height: 21px; }
.file-fields .pick { height: 21px; }
.preview { width: 156px; height: 162px; margin: -6px 3px 0 5px; padding: 3px 8px 0 10px; }
.preview legend { margin-left: -5px; padding: 0 3px; line-height: 16px; }
.preview svg { width: 136px; height: 136px; }
.options { display: grid; grid-template-columns: 265px 6px 157px 106px 7px 1fr; grid-template-rows: repeat(4, 20px); row-gap: 7px; align-items: center; margin-top: 22px; }
.options .pick { height: 20px; }
.a1, .a4 { grid-column: 1; }
.b1, .b2, .b3 { grid-column: 1; justify-self: end; }
.c1, .c2, .c3, .c4 { grid-column: 3; }
.c1, .c2 { width: 99px; }
.d1, .d2 { grid-column: 4; justify-self: end; }
.e1, .e2, .e3, .e4 { grid-column: 6; }
.a1, .b1, .c1, .d1, .e1 { grid-row: 1; }
.b2, .c2, .d2, .e2 { grid-row: 2; }
.b3, .c3, .e3 { grid-row: 3; }
.a4, .c4, .e4 { grid-row: 4; }
.tick { display: flex; align-items: center; gap: 2px; }
.c4 { padding-left: 2px; }
.dim { color: #808080; }
.dim input { border-color: #ccc; }
.dim input:checked::after { border-color: #aaa; }
.current-view { position: relative; width: 115px; }
.mark-view { left: -8px; top: -9px; width: 121px; height: 37px; }
.units { position: relative; display: flex; }
.units .pick { width: 99px; }
.units input { width: 58px; height: 21px; padding: 0 0 0 5px; border: 1px solid #ccc; background: #f0f0f0; color: #808080; }
.mark-units { left: -10px; top: -2px; width: 121px; height: 29px; }
.btn { display: flex; align-items: center; justify-content: center; position: relative; height: 22px; border: 1px solid #ababab; background: #e1e1e1; }
.tools-btn { width: 88px; padding-left: 20px; gap: 28px; }
.actions { display: flex; gap: 14px; padding-right: 3px; }
.actions .btn { flex: 1; }
.mark-open { left: -15px; right: -9px; top: -2px; height: 25px; }
.grip { position: absolute; right: 2px; bottom: 2px; }
```
